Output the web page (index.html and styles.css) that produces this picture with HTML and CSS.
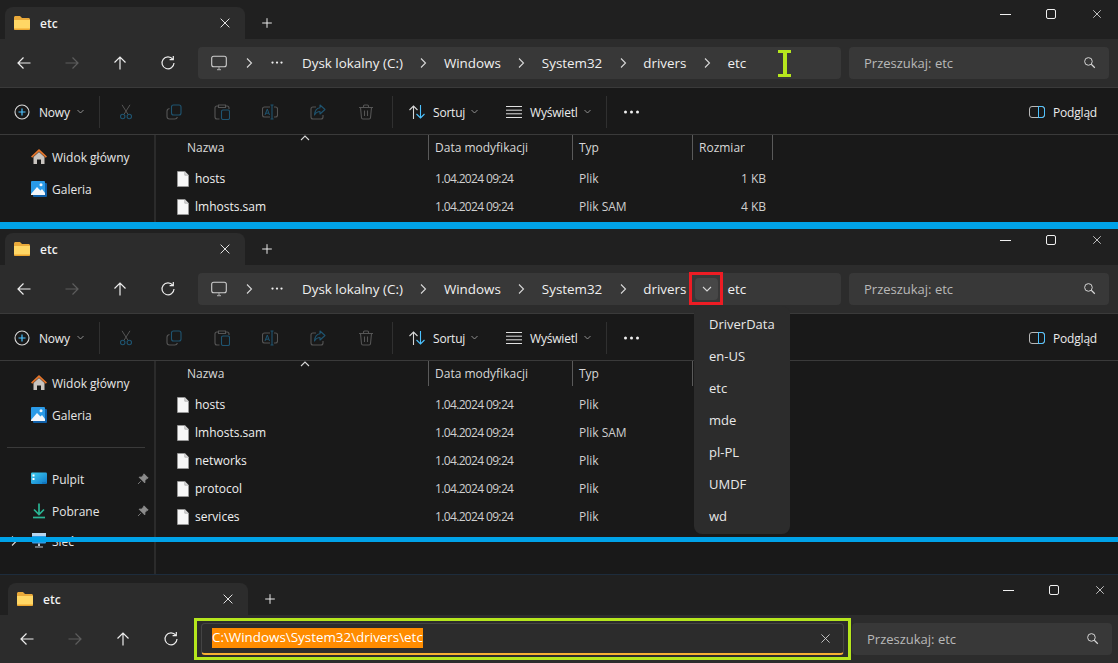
FILE: index.html
```html
<!DOCTYPE html>
<html lang="pl">
<head>
    <meta charset="UTF-8">
    <title>etc - Eksplorator plików</title>
    <link rel="stylesheet" href="styles.css">
</head>
<body>
    <svg class="sprite" aria-hidden="true">
        <defs>
            <linearGradient id="deskGrad" x1="0" y1="0" x2="1" y2="1">
                <stop offset="0" stop-color="#3fd0f2"/>
                <stop offset="1" stop-color="#0f77c9"/>
            </linearGradient>
            <symbol id="i-folder" viewBox="0 0 16 16">
                <path d="M0 2.500C0 1.700.7 1 1.500 1H6l2 2h6.500c.8 0 1.500.7 1.500 1.500V8H0z" fill="#e9a93a"/>
                <path d="M0 5h16v8.500c0 .8-.7 1.500-1.500 1.500h-13C.7 15 0 14.300 0 13.500z" fill="#ffd765"/>
                <path d="M0 13.500h16c0 .8-.7 1.500-1.500 1.500h-13C.7 15 0 14.300 0 13.500z" fill="#eda62e"/>
            </symbol>
            <symbol id="i-left" viewBox="0 0 16 16">
                <path d="M14.500 8H2M7.500 2.500 2 8l5.500 5.500" fill="none" stroke="currentColor" stroke-width="1.200"/>
            </symbol>
            <symbol id="i-right" viewBox="0 0 16 16">
                <path d="M1.500 8H14M8.500 2.500 14 8l-5.500 5.500" fill="none" stroke="currentColor" stroke-width="1.200"/>
            </symbol>
            <symbol id="i-up" viewBox="0 0 16 16">
                <path d="M8 14.500V2M2.500 7.500 8 2l5.500 5.500" fill="none" stroke="currentColor" stroke-width="1.200"/>
            </symbol>
            <symbol id="i-refresh" viewBox="0 0 16 16">
                <path d="M12.800 4.200A6 6 0 1 0 14 8" fill="none" stroke="currentColor" stroke-width="1.200"/>
                <path d="M13.300 1v3.700H9.600" fill="none" stroke="currentColor" stroke-width="1.200"/>
            </symbol>
            <symbol id="i-close" viewBox="0 0 16 16">
                <path d="M3 3l10 10M13 3 3 13" fill="none" stroke="currentColor" stroke-width="1.100"/>
            </symbol>
            <symbol id="i-plus" viewBox="0 0 16 16">
                <path d="M8 2.500v11M2.500 8h11" fill="none" stroke="currentColor" stroke-width="1.100"/>
            </symbol>
            <symbol id="i-monitor" viewBox="0 0 16 16">
                <rect x=".7" y="1.200" width="14.600" height="10.600" rx="2" fill="none" stroke="#cfcfcf" stroke-width="1.100"/>
                <path d="M6 14.700h4M8 12v2.500" fill="none" stroke="#9a9a9a" stroke-width="1.200"/>
            </symbol>
            <symbol id="i-dots" viewBox="0 0 16 4">
                <circle cx="2" cy="2" r="1.500" fill="currentColor"/>
                <circle cx="8" cy="2" r="1.500" fill="currentColor"/>
                <circle cx="14" cy="2" r="1.500" fill="currentColor"/>
            </symbol>
            <symbol id="i-chev-right" viewBox="0 0 12 12">
                <path d="M4 1.500 8.500 6 4 10.500" fill="none" stroke="currentColor" stroke-width="1.100"/>
            </symbol>
            <symbol id="i-chev-down" viewBox="0 0 12 12">
                <path d="M2 4l4 4 4-4" fill="none" stroke="currentColor" stroke-width="1.100"/>
            </symbol>
            <symbol id="i-chev-up" viewBox="0 0 12 12">
                <path d="M2 8l4-4 4 4" fill="none" stroke="currentColor" stroke-width="1.100"/>
            </symbol>
            <symbol id="i-search" viewBox="0 0 16 16">
                <circle cx="6.700" cy="6.700" r="4.700" fill="none" stroke="currentColor" stroke-width="1.200"/>
                <path d="M10.200 10.200 14.500 14.500" fill="none" stroke="currentColor" stroke-width="1.500"/>
            </symbol>
            <symbol id="i-new" viewBox="0 0 16 16">
                <circle cx="8" cy="8" r="7" fill="none" stroke="#d8d8d8" stroke-width="1.100"/>
                <path d="M8 4.500v7M4.500 8h7" fill="none" stroke="#4cc2ff" stroke-width="1.200"/>
            </symbol>
            <symbol id="i-cut" viewBox="0 0 16 16">
                <path d="M6.200 10 12 .8M9.800 10 4 .8" fill="none" stroke="#555" stroke-width="1"/>
                <circle cx="4.700" cy="12.500" r="2.200" fill="none" stroke="#1f5470" stroke-width="1.100"/>
                <circle cx="11.300" cy="12.500" r="2.200" fill="none" stroke="#1f5470" stroke-width="1.100"/>
            </symbol>
            <symbol id="i-copy" viewBox="0 0 16 16">
                <rect x="5.500" y="1" width="9.500" height="10" rx="2" fill="none" stroke="#1f5470" stroke-width="1.100"/>
                <path d="M3.500 4.500C2 4.800 1 5.800 1 7.200v5.300C1 14 2 15 3.500 15h5.300c1.300 0 2.300-.8 2.600-2" fill="none" stroke="#555" stroke-width="1.100"/>
            </symbol>
            <symbol id="i-paste" viewBox="0 0 16 16">
                <path d="M5.500 15H3c-1.200 0-2-.8-2-2V4c0-1.200.8-2 2-2h1.500M11.500 2H13c1.200 0 2 .8 2 2v1M4.500 1h7v2.500h-7z" fill="none" stroke="#555" stroke-width="1.100"/>
                <rect x="7.500" y="6" width="8" height="9.500" rx="1.500" fill="none" stroke="#1f5470" stroke-width="1.100"/>
            </symbol>
            <symbol id="i-rename" viewBox="0 0 16 16">
                <path d="M8 3H2.500C1.300 3 .5 3.800 .5 5v6c0 1.200.8 2 2 2H8M12 3h1.500c1.200 0 2 .8 2 2v6c0 1.200-.8 2-2 2H12" fill="none" stroke="#555" stroke-width="1.100"/>
                <path d="M8.500 1h3M8.500 15h3M10 1v14" fill="none" stroke="#1f5470" stroke-width="1.100"/>
                <path d="M3 11 5.300 5l2.200 6M3.800 9.200h3" fill="none" stroke="#1f5470" stroke-width="1"/>
            </symbol>
            <symbol id="i-share" viewBox="0 0 16 16">
                <path d="M6 3H3C1.800 3 1 3.800 1 5v8c0 1.200.8 2 2 2h8c1.200 0 2-.8 2-2v-2" fill="none" stroke="#555" stroke-width="1.100"/>
                <path d="M10 1l5 4.500L10 10V7.500C7.500 7.500 6 8.500 4.500 11 4.800 7 6.800 4 10 3.700z" fill="none" stroke="#1f5470" stroke-width="1.100" stroke-linejoin="round"/>
            </symbol>
            <symbol id="i-trash" viewBox="0 0 16 16">
                <path d="M1 3.500h14M5.500 3.500V2c0-.6.4-1 1-1h3c.6 0 1 .4 1 1v1.500M2.500 3.500l1 10.300c.1.800.7 1.200 1.400 1.200h6.200c.7 0 1.300-.4 1.400-1.200l1-10.300M6.500 6.500v5.500M9.500 6.500v5.500" fill="none" stroke="#555" stroke-width="1.100"/>
            </symbol>
            <symbol id="i-sort" viewBox="0 0 16 16">
                <path d="M4.500 15V2M.5 6l4-4 4 4" fill="none" stroke="#d8d8d8" stroke-width="1.100"/>
                <path d="M11.500 1v13M7.500 10l4 4 4-4" fill="none" stroke="#4cc2ff" stroke-width="1.100"/>
            </symbol>
            <symbol id="i-view" viewBox="0 0 16 16">
                <path d="M0 2.500h16M0 6.200h16M0 9.800h16M0 13.500h16" fill="none" stroke="#e0e0e0" stroke-width="1"/>
            </symbol>
            <symbol id="i-preview" viewBox="0 0 16 12">
                <rect x=".5" y=".5" width="15" height="11" rx="2.500" fill="none" stroke="#b8b8b8" stroke-width="1"/>
                <path d="M9.500 .5H13c1.400 0 2.500 1.100 2.500 2.500v6c0 1.400-1.100 2.500-2.500 2.500H9.500z" fill="none" stroke="#4cc2ff" stroke-width="1"/>
            </symbol>
            <symbol id="i-home" viewBox="0 0 16 16">
                <path d="M2.500 8 8 3l5.500 5v7H10v-4.500H6V15H2.500z" fill="#c9c4bf"/>
                <path d="M8 0 16 7.500l-1.200 1.300L8 2.600 1.200 8.800 0 7.500z" fill="#e5762c"/>
            </symbol>
            <symbol id="i-gallery" viewBox="0 0 16 16">
                <rect x="2" y="2" width="14" height="14" rx="1" fill="#0f5fa8"/>
                <rect x="0" y="0" width="14" height="14" rx="1" fill="#2a9be8"/>
                <path d="M0 13 6 6l3.500 3.500L11 8l3 4v2H0z" fill="#f2f6fa"/>
                <circle cx="10" cy="3.800" r="1.500" fill="#f2f6fa"/>
            </symbol>
            <symbol id="i-desktop" viewBox="0 0 16 16">
                <rect x="0" y="1.500" width="16" height="11.500" rx="1.200" fill="url(#deskGrad)"/>
                <path d="M1.500 3.500h2v2h-2zM1.500 7h2v2h-2z" fill="#fff"/>
                <path d="M11.500 11.500h1v1h-1zM13.500 11.500h1v1h-1z" fill="#0b4f88"/>
            </symbol>
            <symbol id="i-download" viewBox="0 0 16 16">
                <path d="M8 .5v10.500M3 6.500l5 5 5-5" fill="none" stroke="#2bb594" stroke-width="1.700"/>
                <path d="M2 14.500h12" fill="none" stroke="#2bb594" stroke-width="1.700"/>
            </symbol>
            <symbol id="i-network" viewBox="0 0 16 16">
                <rect x="1" y="0" width="14" height="10.500" rx="1" fill="#2f9be6"/>
                <path d="M1 0h14v3H1z" fill="#b6d5ee"/>
                <path d="M7 10.500h2V13H7zM4 13.500h8v1H4z" fill="#b9c3cc"/>
            </symbol>
            <symbol id="i-pin" viewBox="0 0 12 12">
                <path d="M7 .8 11.200 5 9.800 5.600 8 7.500 7.800 10 2 4.200 4.500 4 6.400 2.200zM3.800 8.200 1 11" fill="#8c8c8c" stroke="#8c8c8c" stroke-width=".8"/>
            </symbol>
            <symbol id="i-file" viewBox="0 0 12 16">
                <path d="M.5.500h7.300L11.500 4.200V15.500H.5z" fill="#f7f7f7" stroke="#9a9a9a" stroke-width=".8"/>
                <path d="M7.800.500v3.700h3.700" fill="#dcdcdc" stroke="#9a9a9a" stroke-width=".6"/>
            </symbol>
        </defs>
    </svg>

    <!-- first window: cursor over the empty part of the breadcrumb -->
    <section class="window window-first">
        <header class="titlebar">
            <div class="tab">
                <svg class="icon-16"><use href="#i-folder"/></svg>
                <span class="tab-title">etc</span>
                <svg class="tab-close"><use href="#i-close"/></svg>
            </div>
            <svg class="tab-plus"><use href="#i-plus"/></svg>
            <div class="win-controls">
                <span class="win-min"></span>
                <span class="win-max"></span>
                <svg class="win-close"><use href="#i-close"/></svg>
            </div>
        </header>
        <div class="navbar">
            <div class="nav-btns">
                <svg class="nav-btn"><use href="#i-left"/></svg>
                <svg class="nav-btn is-off"><use href="#i-right"/></svg>
                <svg class="nav-btn"><use href="#i-up"/></svg>
                <svg class="nav-btn"><use href="#i-refresh"/></svg>
            </div>
            <div class="address">
                <svg class="icon-16 crumb-pc"><use href="#i-monitor"/></svg>
                <span class="crumb-sep"><svg class="chev"><use href="#i-chev-right"/></svg></span>
                <svg class="crumb-more"><use href="#i-dots"/></svg>
                <span class="crumb">Dysk lokalny (C:)</span>
                <span class="crumb-sep"><svg class="chev"><use href="#i-chev-right"/></svg></span>
                <span class="crumb">Windows</span>
                <span class="crumb-sep"><svg class="chev"><use href="#i-chev-right"/></svg></span>
                <span class="crumb">System32</span>
                <span class="crumb-sep"><svg class="chev"><use href="#i-chev-right"/></svg></span>
                <span class="crumb">drivers</span>
                <span class="crumb-sep"><svg class="chev"><use href="#i-chev-right"/></svg></span>
                <span class="crumb">etc</span>
                <span class="ibeam"></span>
            </div>
            <div class="search">
                <span>Przeszukaj: etc</span>
                <svg class="search-icon"><use href="#i-search"/></svg>
            </div>
        </div>
        <div class="toolbar">
            <div class="tool tool-new"><svg class="icon-16"><use href="#i-new"/></svg><span>Nowy</span><svg class="caret"><use href="#i-chev-down"/></svg></div>
            <span class="tool-sep"></span>
            <div class="tool-icons">
                <div class="tool-icon"><svg class="icon-16"><use href="#i-cut"/></svg></div>
                <div class="tool-icon"><svg class="icon-16"><use href="#i-copy"/></svg></div>
                <div class="tool-icon"><svg class="icon-16"><use href="#i-paste"/></svg></div>
                <div class="tool-icon"><svg class="icon-16"><use href="#i-rename"/></svg></div>
                <div class="tool-icon"><svg class="icon-16"><use href="#i-share"/></svg></div>
                <div class="tool-icon"><svg class="icon-16"><use href="#i-trash"/></svg></div>
            </div>
            <span class="tool-sep"></span>
            <div class="tool tool-sort"><svg class="icon-16"><use href="#i-sort"/></svg><span>Sortuj</span><svg class="caret"><use href="#i-chev-down"/></svg></div>
            <div class="tool tool-view"><svg class="icon-16"><use href="#i-view"/></svg><span>Wyświetl</span><svg class="caret"><use href="#i-chev-down"/></svg></div>
            <span class="tool-sep"></span>
            <svg class="tool-dots"><use href="#i-dots"/></svg>
            <div class="tool tool-preview"><svg class="icon-preview"><use href="#i-preview"/></svg><span>Podgląd</span></div>
        </div>
        <div class="content">
            <aside class="sidebar">
                <div class="side-item"><svg class="icon-16"><use href="#i-home"/></svg>Widok główny</div>
                <div class="side-item"><svg class="icon-16"><use href="#i-gallery"/></svg>Galeria</div>
            </aside>
            <div class="files">
                <div class="files-head">
                    <div class="col-name">Nazwa</div>
                    <div>Data modyfikacji</div>
                    <div>Typ</div>
                    <div>Rozmiar</div>
                    <span class="sort-caret"><svg class="chev"><use href="#i-chev-up"/></svg></span>
                </div>
                <div class="file-row"><div class="file-name"><svg class="icon-file"><use href="#i-file"/></svg>hosts</div><div class="file-date">1.04.2024 09:24</div><div>Plik</div><div class="file-size">1 KB</div></div>
                <div class="file-row"><div class="file-name"><svg class="icon-file"><use href="#i-file"/></svg>lmhosts.sam</div><div class="file-date">1.04.2024 09:24</div><div>Plik SAM</div><div class="file-size">4 KB</div></div>
            </div>
        </div>
    </section>

    <!-- second window: breadcrumb dropdown open -->
    <section class="window window-second">
        <header class="titlebar">
            <div class="tab">
                <svg class="icon-16"><use href="#i-folder"/></svg>
                <span class="tab-title">etc</span>
                <svg class="tab-close"><use href="#i-close"/></svg>
            </div>
            <svg class="tab-plus"><use href="#i-plus"/></svg>
            <div class="win-controls">
                <span class="win-min"></span>
                <span class="win-max"></span>
                <svg class="win-close"><use href="#i-close"/></svg>
            </div>
        </header>
        <div class="navbar">
            <div class="nav-btns">
                <svg class="nav-btn"><use href="#i-left"/></svg>
                <svg class="nav-btn is-off"><use href="#i-right"/></svg>
                <svg class="nav-btn"><use href="#i-up"/></svg>
                <svg class="nav-btn"><use href="#i-refresh"/></svg>
            </div>
            <div class="address">
                <svg class="icon-16 crumb-pc"><use href="#i-monitor"/></svg>
                <span class="crumb-sep"><svg class="chev"><use href="#i-chev-right"/></svg></span>
                <svg class="crumb-more"><use href="#i-dots"/></svg>
                <span class="crumb">Dysk lokalny (C:)</span>
                <span class="crumb-sep"><svg class="chev"><use href="#i-chev-right"/></svg></span>
                <span class="crumb">Windows</span>
                <span class="crumb-sep"><svg class="chev"><use href="#i-chev-right"/></svg></span>
                <span class="crumb">System32</span>
                <span class="crumb-sep"><svg class="chev"><use href="#i-chev-right"/></svg></span>
                <span class="crumb">drivers</span>
                <span class="crumb-sep"><span class="red-box"></span><span class="chev-btn"><svg class="chev"><use href="#i-chev-down"/></svg></span></span>
                <span class="crumb">etc</span>
            </div>
            <div class="search">
                <span>Przeszukaj: etc</span>
                <svg class="search-icon"><use href="#i-search"/></svg>
            </div>
        </div>
        <div class="toolbar">
            <div class="tool tool-new"><svg class="icon-16"><use href="#i-new"/></svg><span>Nowy</span><svg class="caret"><use href="#i-chev-down"/></svg></div>
            <span class="tool-sep"></span>
            <div class="tool-icons">
                <div class="tool-icon"><svg class="icon-16"><use href="#i-cut"/></svg></div>
                <div class="tool-icon"><svg class="icon-16"><use href="#i-copy"/></svg></div>
                <div class="tool-icon"><svg class="icon-16"><use href="#i-paste"/></svg></div>
                <div class="tool-icon"><svg class="icon-16"><use href="#i-rename"/></svg></div>
                <div class="tool-icon"><svg class="icon-16"><use href="#i-share"/></svg></div>
                <div class="tool-icon"><svg class="icon-16"><use href="#i-trash"/></svg></div>
            </div>
            <span class="tool-sep"></span>
            <div class="tool tool-sort"><svg class="icon-16"><use href="#i-sort"/></svg><span>Sortuj</span><svg class="caret"><use href="#i-chev-down"/></svg></div>
            <div class="tool tool-view"><svg class="icon-16"><use href="#i-view"/></svg><span>Wyświetl</span><svg class="caret"><use href="#i-chev-down"/></svg></div>
            <span class="tool-sep"></span>
            <svg class="tool-dots"><use href="#i-dots"/></svg>
            <div class="tool tool-preview"><svg class="icon-preview"><use href="#i-preview"/></svg><span>Podgląd</span></div>
        </div>
        <div class="content">
            <aside class="sidebar">
                <div class="side-item"><svg class="icon-16"><use href="#i-home"/></svg>Widok główny</div>
                <div class="side-item"><svg class="icon-16"><use href="#i-gallery"/></svg>Galeria</div>
                <hr class="side-rule">
                <div class="side-item"><svg class="icon-16"><use href="#i-desktop"/></svg>Pulpit<svg class="pin"><use href="#i-pin"/></svg></div>
                <div class="side-item"><svg class="icon-16"><use href="#i-download"/></svg>Pobrane<svg class="pin"><use href="#i-pin"/></svg></div>
                <div class="side-item side-net"><svg class="chev net-chev"><use href="#i-chev-right"/></svg><svg class="icon-16"><use href="#i-network"/></svg>Sieć</div>
            </aside>
            <div class="files">
                <div class="files-head">
                    <div class="col-name">Nazwa</div>
                    <div>Data modyfikacji</div>
                    <div>Typ</div>
                    <div></div>
                    <span class="sort-caret"><svg class="chev"><use href="#i-chev-up"/></svg></span>
                </div>
                <div class="file-row"><div class="file-name"><svg class="icon-file"><use href="#i-file"/></svg>hosts</div><div class="file-date">1.04.2024 09:24</div><div>Plik</div></div>
                <div class="file-row"><div class="file-name"><svg class="icon-file"><use href="#i-file"/></svg>lmhosts.sam</div><div class="file-date">1.04.2024 09:24</div><div>Plik SAM</div></div>
                <div class="file-row"><div class="file-name"><svg class="icon-file"><use href="#i-file"/></svg>networks</div><div class="file-date">1.04.2024 09:24</div><div>Plik</div></div>
                <div class="file-row"><div class="file-name"><svg class="icon-file"><use href="#i-file"/></svg>protocol</div><div class="file-date">1.04.2024 09:24</div><div>Plik</div></div>
                <div class="file-row"><div class="file-name"><svg class="icon-file"><use href="#i-file"/></svg>services</div><div class="file-date">1.04.2024 09:24</div><div>Plik</div></div>
            </div>
        </div>
        <ul class="dropdown">
            <li>DriverData</li>
            <li>en-US</li>
            <li>etc</li>
            <li>mde</li>
            <li>pl-PL</li>
            <li>UMDF</li>
            <li>wd</li>
        </ul>
    </section>

    <!-- third window: path typed in the address box -->
    <section class="window window-third">
        <header class="titlebar">
            <div class="tab">
                <svg class="icon-16"><use href="#i-folder"/></svg>
                <span class="tab-title">etc</span>
                <svg class="tab-close"><use href="#i-close"/></svg>
            </div>
            <svg class="tab-plus"><use href="#i-plus"/></svg>
            <div class="win-controls">
                <span class="win-min"></span>
                <span class="win-max"></span>
                <svg class="win-close"><use href="#i-close"/></svg>
            </div>
        </header>
        <div class="navbar">
            <div class="nav-btns">
                <svg class="nav-btn"><use href="#i-left"/></svg>
                <svg class="nav-btn is-off"><use href="#i-right"/></svg>
                <svg class="nav-btn"><use href="#i-up"/></svg>
                <svg class="nav-btn"><use href="#i-refresh"/></svg>
            </div>
            <div class="address address-input">
                <span class="path-selected">C:\Windows\System32\drivers\etc</span>
                <svg class="input-clear"><use href="#i-close"/></svg>
                <span class="lime-box"></span>
            </div>
            <div class="search">
                <span>Przeszukaj: etc</span>
                <svg class="search-icon"><use href="#i-search"/></svg>
            </div>
        </div>
    </section>

    <div class="blue-line line-one"></div>
    <div class="blue-line line-two"></div>
</body>
</html>
```

FILE: styles.css
```css
/* Dark explorer windows stacked in one screenshot */
* {
    box-sizing: border-box;
}
html, body {
    margin: 0;
    height: 100%;
    overflow: hidden;
}
body {
    position: relative;
    background-color: #191919;
    color: #e6e6e6;
    font-family: "Open Sans", "Noto Sans", sans-serif;
    font-size: 12px;
}
.sprite {
    position: absolute;
    width: 0;
    height: 0;
}
.icon-16 {
    width: 16px;
    height: 16px;
    flex: none;
}

.window {
    position: relative;
    width: 1118px;
    overflow: hidden;
    background-color: #191919;
}
.window-first {
    height: 226px;
}
.window-second {
    height: 348px;
}
.window-third {
    width: 1121px;
    height: 89px;
    padding-top: 1px;
    border-top: 1px solid #1d2c3c;
    background-color: #202020;
}
.window-third .titlebar {
    padding-left: 8px;
}
.window-third .nav-btns {
    width: 201px;
    padding-left: 19px;
}

/* title bar */
.titlebar {
    display: flex;
    align-items: flex-end;
    height: 39px;
    padding-left: 5px;
    background-color: #202020;
}
.tab {
    display: flex;
    align-items: center;
    width: 240px;
    height: 32px;
    padding: 0 13px 0 9px;
    border-radius: 8px 8px 0 0;
    background-color: #2c2c2c;
    color: #f2f2f2;
}
.tab-title {
    margin-left: 10px;
    font-size: 12px;
    font-weight: 600;
}
.tab-close {
    width: 14px;
    height: 14px;
    margin-left: auto;
    color: #e8e8e8;
}
.tab-plus {
    width: 14px;
    height: 14px;
    margin: 0 0 9px 15px;
    color: #f0f0f0;
}
.win-controls {
    display: flex;
    align-items: center;
    gap: 35px;
    height: 39px;
    margin-left: auto;
    padding: 0 15px 11px 0;
    color: #e0e0e0;
}
.win-min {
    width: 11px;
    height: 1px;
    background-color: #f0f0f0;
}
.win-max {
    width: 10px;
    height: 10px;
    border: 1px solid #f0f0f0;
    border-radius: 2px;
}
.win-close {
    width: 12px;
    height: 12px;
}

/* navigation row */
.navbar {
    display: flex;
    align-items: center;
    height: 49px;
    padding: 0 9px 1px 0;
    border-bottom: 1px solid #3a3a3a;
    background-color: #2c2c2c;
}
.nav-btns {
    display: flex;
    width: 198px;
    padding-left: 16px;
    gap: 32px;
    flex: none;
}
.nav-btn {
    width: 16px;
    height: 16px;
    color: #ededed;
}
.nav-btn.is-off {
    color: #5d5d5d;
}
.address {
    position: relative;
    display: flex;
    align-items: center;
    width: 643px;
    height: 32px;
    padding-left: 13px;
    border-radius: 4px;
    background-color: #383838;
    font-size: 13.4px;
    color: #f0f0f0;
}
.crumb-pc {
    margin-right: 1px;
}
.crumb-sep {
    position: relative;
    display: flex;
    align-items: center;
    justify-content: center;
    width: 41px;
    height: 32px;
    flex: none;
}
.chev {
    width: 12px;
    height: 12px;
    color: #d8d8d8;
}
.crumb-more {
    width: 12px;
    height: 3px;
    margin: 0 19px 0 2px;
    flex: none;
    color: #f0f0f0;
}
.ibeam {
    position: absolute;
    left: 580px;
    top: 3px;
    width: 13px;
    height: 27px;
    border-top: 3px solid #b5e61d;
    border-bottom: 3px solid #b5e61d;
}
.ibeam::before {
    content: "";
    display: block;
    width: 4px;
    height: 21px;
    margin: 0 auto;
    background-color: #b5e61d;
}
.chev-btn {
    display: flex;
    align-items: center;
    justify-content: center;
    width: 23px;
    height: 22px;
    border-radius: 4px;
    background-color: #474747;
}
.red-box {
    position: absolute;
    left: 3px;
    top: -1px;
    width: 34px;
    height: 33px;
    border: 3px solid #ed1c24;
}
.search {
    display: flex;
    align-items: center;
    justify-content: space-between;
    width: 260px;
    height: 32px;
    margin-left: 8px;
    padding: 0 13px 0 15px;
    border-radius: 4px;
    background-color: #383838;
    font-size: 13px;
    color: #b8b8b8;
}
.search-icon {
    width: 13px;
    height: 13px;
    color: #d8d8d8;
}
.address-input {
    padding-left: 10px;
    border: 1px solid #444;
    border-bottom: 2px solid #f7b032;
    background-color: #2c2c2c;
}
.path-selected {
    padding: 0 0 1px;
    background-color: #ff8c00;
    color: #fff;
    line-height: 19px;
}
.input-clear {
    width: 13px;
    height: 13px;
    margin-left: auto;
    margin-right: 11px;
    color: #d0d0d0;
}
.lime-box {
    position: absolute;
    left: -8px;
    top: -6px;
    width: 657px;
    height: 42px;
    border: 3px solid #b5e61d;
}

/* command bar */
.toolbar {
    display: flex;
    align-items: center;
    height: 47px;
    padding-top: 1px;
    border-bottom: 1px solid #3a3a3a;
    background-color: #191919;
}
.tool {
    display: flex;
    align-items: center;
    font-size: 12px;
    letter-spacing: -0.2px;
    color: #ececec;
}
.tool span {
    margin-top: 2px;
}
.tool-new {
    width: 99px;
    padding-left: 14px;
    gap: 9px;
}
.tool-sort {
    width: 97px;
    padding-left: 16px;
    gap: 8px;
}
.tool-view {
    width: 116px;
    padding-left: 16px;
    gap: 8px;
}
.caret {
    width: 9px;
    height: 9px;
    margin-left: -3px;
    color: #a8a8a8;
    flex: none;
}
.tool-sep {
    width: 1px;
    height: 32px;
    background-color: #303030;
    flex: none;
}
.tool-icons {
    display: flex;
    padding: 0 2px;
    flex: none;
}
.tool-icon {
    display: flex;
    justify-content: center;
    width: 48px;
}
.tool-dots {
    width: 17px;
    height: 4px;
    margin-left: 16px;
    flex: none;
    color: #f0f0f0;
}
.tool-preview {
    gap: 8px;
    margin-left: auto;
    padding-right: 21px;
}
.icon-preview {
    width: 16px;
    height: 12px;
    flex: none;
}

/* sidebar and file list */
.content {
    display: flex;
    height: 300px;
}
.sidebar {
    width: 156px;
    padding-top: 6px;
    border-right: 2px solid #2b2b2b;
    flex: none;
}
.side-item {
    display: flex;
    align-items: center;
    gap: 5px;
    height: 32px;
    padding-left: 31px;
    color: #e6e6e6;
    white-space: nowrap;
}
.side-rule {
    height: 1px;
    margin: 16px 9px 15px 7px;
    border: none;
    background-color: #3a3a3a;
}
.pin {
    width: 12px;
    height: 12px;
    margin-left: auto;
    margin-right: 5px;
}
.side-net {
    position: relative;
    margin-top: -2px;
}
.net-chev {
    position: absolute;
    left: 8px;
    top: 10px;
}
.files {
    position: relative;
    flex: 1;
    min-width: 0;
}
.files-head, .file-row {
    display: grid;
    grid-template-columns: 273px 144px 120px 80px;
}
.files-head {
    height: 25px;
    margin-bottom: 5px;
    line-height: 25px;
    color: #d8d8d8;
}
.files-head > div {
    padding-left: 6px;
    border-right: 1px solid #5a5a5a;
}
.files-head .col-name {
    padding-left: 31px;
}
.sort-caret {
    position: absolute;
    left: 143px;
    top: -3px;
    line-height: 0;
}
.file-row {
    height: 28px;
    line-height: 28px;
    color: #cfcfcf;
}
.file-row > div {
    padding-left: 6px;
}
.file-row .file-name {
    display: flex;
    align-items: center;
    gap: 6px;
    padding-left: 21px;
    color: #f0f0f0;
}
.file-row .file-date {
    letter-spacing: -0.65px;
}
.file-row .file-size {
    padding: 0 7px 0 0;
    text-align: right;
}
.icon-file {
    width: 12px;
    height: 16px;
    flex: none;
}

/* menu under the breadcrumb arrow */
.dropdown {
    position: absolute;
    left: 694px;
    top: 80px;
    width: 96px;
    margin: 0;
    padding: 2px 0;
    border-radius: 8px;
    background-color: #2c2c2c;
    list-style: none;
    font-size: 13px;
    color: #e8e8e8;
}
.dropdown li {
    height: 32px;
    padding-left: 15px;
    line-height: 32px;
}

/* separators painted over the shot */
.blue-line {
    position: absolute;
    left: 0;
    width: 100%;
    background-color: #00a2e8;
}
.line-one {
    top: 222px;
    height: 7px;
}
.line-two {
    top: 537px;
    height: 5px;
}
```
